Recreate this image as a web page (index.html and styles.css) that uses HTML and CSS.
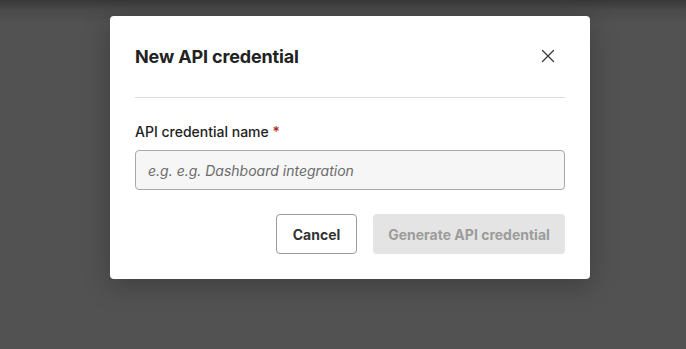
FILE: index.html
```html
<!DOCTYPE html>
<html>
<head>
<meta charset="utf-8">
<link rel="stylesheet" href="styles.css">
</head>
<body>
<div class="overlay">
  <div class="modal" role="dialog">
    <div class="header">
      <h2 class="title">New API credential</h2>
      <button class="close" aria-label="Close">
        <svg width="14" height="14" viewBox="0 0 14 14"><path d="M1.5 1.5 L12.5 12.5 M12.5 1.5 L1.5 12.5" stroke="#3a3a3a" stroke-width="1.3" stroke-linecap="round"/></svg>
      </button>
    </div>
    <div class="divider"></div>
    <div class="body">
      <label class="label">API credential name <span class="req">*</span></label>
      <input class="input" type="text" placeholder="e.g. e.g. Dashboard integration">
    </div>
    <div class="footer">
      <button class="btn btn-secondary">Cancel</button>
      <button class="btn btn-primary" disabled>Generate API credential</button>
    </div>
  </div>
</div>
</body>
</html>
```
FILE: styles.css
```css
* { box-sizing: border-box; }
html, body { margin: 0; height: 100%; }
body {
  font-family: Inter, "Noto Sans", sans-serif;
  background: linear-gradient(to bottom, #383838 0px, #4a4a4a 10px, #525252 24px, #525252 100%);
}
.overlay {
  height: 100%;
  display: flex;
  justify-content: center;
  align-items: flex-start;
  padding: 16px 0 0 14px;
}
.modal {
  width: 480px;
  background: #fff;
  border-radius: 4px;
  padding: 0 25px 25px;
  box-shadow: 0 6px 28px rgba(0,0,0,0.25);
}
.header {
  display: flex;
  align-items: center;
  justify-content: space-between;
  padding: 24px 0 24px;
  height: 80px;
}
.title {
  margin: 0;
  font-size: 18px;
  font-weight: 700;
  color: #222;
  letter-spacing: -0.15px;
}
.close {
  width: 32px;
  height: 32px;
  margin-right: 1px;
  border: none;
  background: none;
  display: flex;
  align-items: center;
  justify-content: center;
  padding: 0;
}
.divider {
  height: 1px;
  background: #dcdcdc;
  margin-top: 1px;
}
.body {
  padding-top: 24px;
  display: flex;
  flex-direction: column;
  gap: 8px;
}
.label {
  font-size: 14px;
  font-weight: 500;
  color: #222;
  line-height: 20px;
}
.req { color: #b3232b; }
.input {
  height: 40px;
  width: 100%;
  border: 1px solid #a8a8a8;
  border-radius: 4px;
  background: #f6f6f6;
  padding: 0 12px;
  font-family: Inter, "Noto Sans", sans-serif;
  font-size: 14px;
  color: #222;
}
.input::placeholder {
  color: #6b6b6b;
  font-style: italic;
}
.footer {
  display: flex;
  justify-content: flex-end;
  gap: 16px;
  padding-top: 24px;
}
.btn {
  height: 40px;
  border-radius: 4px;
  font-family: Inter, "Noto Sans", sans-serif;
  font-size: 14px;
  font-weight: 700;
  padding: 0;
  white-space: nowrap;
}
.btn-secondary {
  width: 81px;
  background: #fff;
  border: 1px solid #9a9a9a;
  color: #333;
}
.btn-primary {
  width: 192px;
  background: #e4e4e4;
  border: none;
  color: #9c9c9c;
}
```
